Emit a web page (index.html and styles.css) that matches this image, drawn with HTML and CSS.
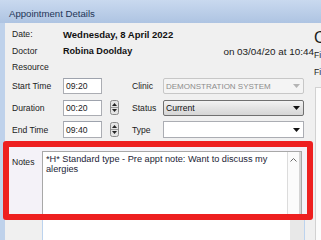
FILE: index.html
```html
<!DOCTYPE html>
<html>
<head>
<meta charset="utf-8">
<link rel="stylesheet" href="styles.css">
</head>
<body>
<div class="window">
  <div class="titlebar">Appointment Details</div>
  <div class="content">
    <div class="left">
      <div class="row r-date"><span class="lbl">Date:</span><span class="val date">Wednesday, 8 April 2022</span></div>
      <div class="row r-doc"><span class="lbl">Doctor</span><span class="val">Robina Doolday</span><span class="when">on 03/04/20 at 10:44</span></div>
      <div class="row r-res"><span class="lbl">Resource</span></div>
      <div class="form">
        <span class="lbl">Start Time</span>
        <div class="input">09:20</div>
        <div class="spin-cell"></div>
        <span class="lbl">Clinic</span>
        <div class="combo disabled"><span>DEMONSTRATION SYSTEM</span><svg class="arrow" width="7" height="4" viewBox="0 0 7 4"><path d="M0 0H7L3.5 4Z" fill="#b4b4b4"/></svg></div>

        <span class="lbl">Duration</span>
        <div class="input">00:20</div>
        <div class="spin-cell"><svg class="spin" width="9" height="15" viewBox="0 0 9 15"><rect x="0.5" y="0.5" width="8" height="14" rx="2" fill="#e4e4e4" stroke="#8c8c8c"/><line x1="1" y1="7.5" x2="8" y2="7.5" stroke="#9a9a9a"/><path d="M2 6L4.5 3L7 6Z" fill="#222"/><path d="M2 9L4.5 12L7 9Z" fill="#222"/></svg></div>
        <span class="lbl">Status</span>
        <div class="combo status"><span>Current</span><svg class="arrow" width="7" height="4" viewBox="0 0 7 4"><path d="M0 0H7L3.5 4Z" fill="#111"/></svg></div>

        <span class="lbl">End Time</span>
        <div class="input">09:40</div>
        <div class="spin-cell"><svg class="spin" width="9" height="15" viewBox="0 0 9 15"><rect x="0.5" y="0.5" width="8" height="14" rx="2" fill="#e4e4e4" stroke="#8c8c8c"/><line x1="1" y1="7.5" x2="8" y2="7.5" stroke="#9a9a9a"/><path d="M2 6L4.5 3L7 6Z" fill="#222"/><path d="M2 9L4.5 12L7 9Z" fill="#222"/></svg></div>
        <span class="lbl">Type</span>
        <div class="combo plain"><span></span><svg class="arrow" width="7" height="4" viewBox="0 0 7 4"><path d="M0 0H7L3.5 4Z" fill="#111"/></svg></div>
      </div>
      <div class="notes-box">
        <span class="lbl notes-lbl">Notes</span>
        <div class="textarea">
          <div class="ta-text">*H* Standard type - Pre appt note: Want to discuss my alergies</div>
          <div class="vscroll"><svg width="9" height="6" viewBox="0 0 9 6"><path d="M1.5 4.5L4.5 1.5L7.5 4.5" fill="none" stroke="#6a6a6a" stroke-width="1"/></svg></div>
        </div>
      </div>
      <div class="below"><div class="below-track"></div></div>
    </div>
    <div class="right">
      <div class="big">C</div>
      <div class="fi">Fi</div>
      <div class="fi">Fi</div>
      <div class="rbox"></div>
    </div>
  </div>
</div>
</body>
</html>
```

FILE: styles.css
```css
* { box-sizing: border-box; }
html, body {
  margin: 0;
  padding: 0;
}
body {
  width: 321px;
  height: 240px;
  overflow: hidden;
  background: #bfd2eb;
  font-family: "Liberation Sans", Arial, sans-serif;
  color: #1b1b1b;
}
.window {
  display: flex;
  flex-direction: column;
  height: 240px;
}
.titlebar {
  height: 23px;
  padding: 3px 0 0 9px;
  line-height: 22px;
  font-size: 9.6px;
  color: #1e3557;
  background: linear-gradient(#c9d9ef, #aec4e2);
}
.content {
  flex: 1;
  display: flex;
  margin-left: 5px;
  background: #f0f0f0;
}
.left {
  width: 308px;
  flex: none;
  padding: 3px 0 0 7px;
  display: flex;
  flex-direction: column;
}
.lbl {
  font-size: 8.6px;
  color: #1b1b1b;
}
.row {
  display: flex;
  align-items: center;
}
.row .lbl { width: 51px; flex: none; }
.r-date { height: 16px; }
.r-doc { height: 17px; }
.r-res { height: 15px; }
.val {
  font-weight: bold;
  font-size: 9.1px;
  color: #111;
}
.val.date { font-size: 9.5px; }
.when {
  margin-left: auto;
  margin-right: -1px;
  padding-top: 2px;
  font-size: 9.9px;
  color: #1b1b1b;
  white-space: nowrap;
}
.form {
  margin-top: 4px;
  display: grid;
  grid-template-columns: 51px 39px 30px 31px 141px;
  grid-template-rows: 16px 16px 17px;
  row-gap: 5.5px;
  align-items: center;
}
.input {
  height: 100%;
  border: 1px solid #abadb3;
  border-top-color: #9ea3ad;
  background: #fff;
  font-size: 8.6px;
  padding-left: 2px;
  display: flex;
  align-items: center;
}
.spin-cell {
  height: 100%;
  display: flex;
  align-items: center;
}
.spin { margin-left: 8px; display: block; }
.combo {
  height: 100%;
  border-radius: 2px;
  display: flex;
  align-items: center;
  justify-content: space-between;
  padding: 0 3px 0 2px;
  font-size: 8.6px;
}
.combo .arrow { display: block; }
.combo.disabled {
  border: 1px solid #c7c7c7;
  background: #f4f4f4;
  color: #8c8c8c;
  font-size: 8px;
}
.combo.status {
  border: 1px solid #707070;
  background: linear-gradient(#f3f3f3, #e3e3e3 50%, #d6d6d6);
  color: #111;
}
.combo.plain {
  border: 1px solid #abadb3;
  border-radius: 0;
  background: #fff;
}
.notes-box {
  margin: 3px 0 0 -9px;
  width: 310px;
  height: 79px;
  border: 6px solid #ee2020;
  border-radius: 3px;
  background: #f4f2f8;
  display: flex;
  padding: 4px 5px 0 3px;
}
.notes-lbl {
  width: 30px;
  flex: none;
  padding-top: 6px;
  line-height: 10px;
}
.textarea {
  flex: 1;
  height: 100%;
  background: #fff;
  border: 1px solid #a8a8a8;
  border-bottom: none;
  display: flex;
}
.ta-text {
  flex: 1;
  padding: 2px 0 0 3px;
  font-size: 9.2px;
  line-height: 10px;
  color: #1c2336;
}
.vscroll {
  width: 14px;
  flex: none;
  border-left: 1px solid #dcdcdc;
  border-right: 2px solid #d4d4d4;
  background: #fbfbfb;
  display: flex;
  justify-content: center;
  padding-top: 5px;
}
.vscroll svg { display: block; }
.below {
  margin-left: 30px;
  width: 263px;
  height: 20px;
  border-left: 1px solid #bcd3ee;
  border-right: 1px solid #bcd3ee;
  background: #fff;
  display: flex;
  justify-content: flex-end;
}
.below-track {
  width: 14px;
  background: #e8e8e8;
}
.right {
  flex: 1;
  min-width: 0;
  padding: 6px 0 0 1px;
  display: flex;
  flex-direction: column;
  overflow: hidden;
}
.big {
  font-size: 16px;
  line-height: 18px;
  color: #1b1b1b;
}
.fi {
  font-size: 8.6px;
  line-height: 17px;
}
.rbox {
  margin: 6px 0 0 1px;
  flex: 1;
  border: 1px solid #d2d2d2;
  border-right: none;
  border-bottom: none;
  background: #fcfcfc;
}
```
